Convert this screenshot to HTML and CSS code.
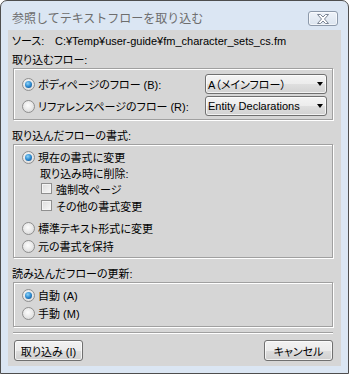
FILE: index.html
```html
<!DOCTYPE html>
<html lang="ja">
<head>
    <meta charset="UTF-8">
    <title>参照してテキストフローを取り込む</title>
    <link rel="stylesheet" href="styles.css">
</head>
<body>
    <div class="window">
        <div class="titlebar">
            <span class="title">参照してテキストフローを取り込む</span>
            <span class="close">
                <svg width="14" height="10" viewBox="0 0 14 10">
                    <path d="M1.5 0.5h3l2.5 2.5l2.5-2.5h3l-4 4.5l4 4.5h-3l-2.5-2.5l-2.5 2.5h-3l4-4.5z" fill="#fff" stroke="#7b8594" stroke-width="1"/>
                </svg>
            </span>
        </div>

        <div class="client">
            <div class="source">
                <span class="source-label">ソース:</span>
                <span class="path">C:¥Temp¥user-guide¥fm_character_sets_cs.fm</span>
            </div>

            <div class="section-label">取り込むフロー:</div>
            <div class="group group-flow">
                <div class="row">
                    <span class="radio checked"></span>
                    <span class="text">ボディページのフロー (B):</span>
                    <span class="combo">A（メインフロー）<i class="arrow"></i></span>
                </div>
                <div class="row">
                    <span class="radio"></span>
                    <span class="text">リファレンスページのフロー (R):</span>
                    <span class="combo">Entity Declarations<i class="arrow"></i></span>
                </div>
            </div>

            <div class="section-label gap">取り込んだフローの書式:</div>
            <div class="group group-format">
                <div class="row r18">
                    <span class="radio checked"></span>
                    <span class="text">現在の書式に変更</span>
                </div>
                <div class="row r14 sub-label">取り込み時に削除:</div>
                <div class="row r17 sub">
                    <span class="check"></span>
                    <span class="text">強制改ページ</span>
                </div>
                <div class="row r17 sub">
                    <span class="check"></span>
                    <span class="text">その他の書式変更</span>
                </div>
                <div class="row r18 spaced">
                    <span class="radio"></span>
                    <span class="text">標準テキスト形式に変更</span>
                </div>
                <div class="row r18">
                    <span class="radio"></span>
                    <span class="text">元の書式を保持</span>
                </div>
            </div>

            <div class="section-label gap">読み込んだフローの更新:</div>
            <div class="group group-update">
                <div class="row r18">
                    <span class="radio checked"></span>
                    <span class="text">自動 (A)</span>
                </div>
                <div class="row r18">
                    <span class="radio"></span>
                    <span class="text">手動 (M)</span>
                </div>
            </div>

            <div class="separator"></div>

            <div class="buttons">
                <button class="btn default">取り込み (I)</button>
                <button class="btn">キャンセル</button>
            </div>
        </div>
    </div>
</body>
</html>
```

FILE: styles.css
```css
body {
    margin: 0;
    width: 349px;
    height: 374px;
    overflow: hidden;
    background: #fff;
    font-family: "Liberation Sans", "Noto Sans CJK JP", sans-serif;
    font-size: 11px;
    font-feature-settings: "palt";
    color: #000;
}
.window {
    width: 349px;
    height: 374px;
    box-sizing: border-box;
    border: 1px solid #4e4e4e;
    border-radius: 7px 7px 0 0;
    background: #dbe6f3;
    display: flex;
    flex-direction: column;
}
.titlebar {
    height: 29px;
    box-sizing: border-box;
    padding: 7px 10px 0 11px;
    display: flex;
    align-items: flex-start;
}
.title {
    flex: 1;
    line-height: 20px;
    font-family: "Noto Sans CJK JP", sans-serif;
    font-size: 12px;
    font-feature-settings: normal;
    color: #6d6d6d;
}
.close {
    margin-top: 3px;
    width: 30px;
    height: 15px;
    box-sizing: border-box;
    border: 1px solid #8c99aa;
    border-radius: 3px;
    background: linear-gradient(#eef3f9, #dbe4ef);
    box-shadow: inset 0 0 0 1px rgba(255, 255, 255, 0.6);
    display: flex;
    align-items: center;
    justify-content: center;
}
.client {
    margin: 0 7px 7px;
    height: 336px;
    background: #d6d6d6;
    display: flex;
    flex-direction: column;
}
.source {
    height: 22px;
    line-height: 22px;
    padding-left: 4px;
    display: flex;
}
.source-label {
    width: 43px;
}
.section-label {
    height: 16px;
    line-height: 16px;
    padding-left: 4px;
}
.section-label.gap {
    margin-top: 8px;
}
.group {
    margin: 0 8px 0 5px;
    border: 1px solid #a0a0a0;
    box-shadow: inset 1px 1px 0 #fff, 1px 1px 0 #fff;
    display: flex;
    flex-direction: column;
}
.group-flow {
    height: 52px;
    box-sizing: border-box;
    padding: 4px 5px 0 8px;
}
.group-format {
    height: 114px;
    box-sizing: border-box;
    padding: 3px 5px 0 8px;
}
.group-update {
    height: 45px;
    box-sizing: border-box;
    padding: 3px 5px 0 8px;
}
.row {
    height: 22px;
    display: flex;
    align-items: center;
}
.r18 { height: 18px; }
.r17 { height: 17px; }
.r14 { height: 14px; }
.spaced { margin-top: 5px; }
.sub-label {
    padding-left: 18px;
}
.sub {
    padding-left: 19px;
}
.radio {
    width: 13px;
    height: 13px;
    box-sizing: border-box;
    border-radius: 50%;
    border: 1px solid #8f8f8f;
    background: radial-gradient(circle at 45% 40%, #fdfdfd 0, #e6e6e6 55%, #cfcfcf 100%);
    margin-right: 3px;
    position: relative;
    flex: none;
}
.radio.checked::after {
    content: "";
    position: absolute;
    left: 2px;
    top: 2px;
    width: 7px;
    height: 7px;
    border-radius: 50%;
    background: radial-gradient(circle at 40% 35%, #8fd4f8 0, #2d8ad0 50%, #0b3e78 100%);
}
.check {
    width: 11px;
    height: 11px;
    box-sizing: border-box;
    border: 1px solid #8f8f8f;
    background: linear-gradient(135deg, #dcdcdc, #f8f8f8);
    box-shadow: inset 0 0 0 1px #f4f4f4;
    margin-right: 4px;
    flex: none;
}
.combo {
    margin-left: auto;
    width: 122px;
    height: 20px;
    box-sizing: border-box;
    border: 1px solid #707070;
    border-radius: 3px;
    background: linear-gradient(#f4f4f4 0, #ececec 50%, #dfdfdf 51%, #d2d2d2 100%);
    box-shadow: inset 0 0 0 1px rgba(255, 255, 255, 0.7);
    padding-left: 2px;
    display: flex;
    align-items: center;
    position: relative;
}
.arrow {
    position: absolute;
    right: 3px;
    top: 7px;
    width: 0;
    height: 0;
    border-left: 3.5px solid transparent;
    border-right: 3.5px solid transparent;
    border-top: 4px solid #000;
}
.separator {
    margin: 5px 8px 0 5px;
    height: 1px;
    background: #a0a0a0;
    border-bottom: 1px solid #fff;
}
.buttons {
    margin-top: 6px;
    padding: 0 8px 0 6px;
    display: flex;
    justify-content: space-between;
}
.btn {
    width: 69px;
    height: 21px;
    padding: 0;
    border: 1px solid #707070;
    border-radius: 3px;
    background: linear-gradient(#f2f2f2 0, #ebebeb 50%, #dddddd 51%, #cfcfcf 100%);
    box-shadow: inset 0 0 0 1px rgba(255, 255, 255, 0.7);
    font: inherit;
    color: #000;
}
```
